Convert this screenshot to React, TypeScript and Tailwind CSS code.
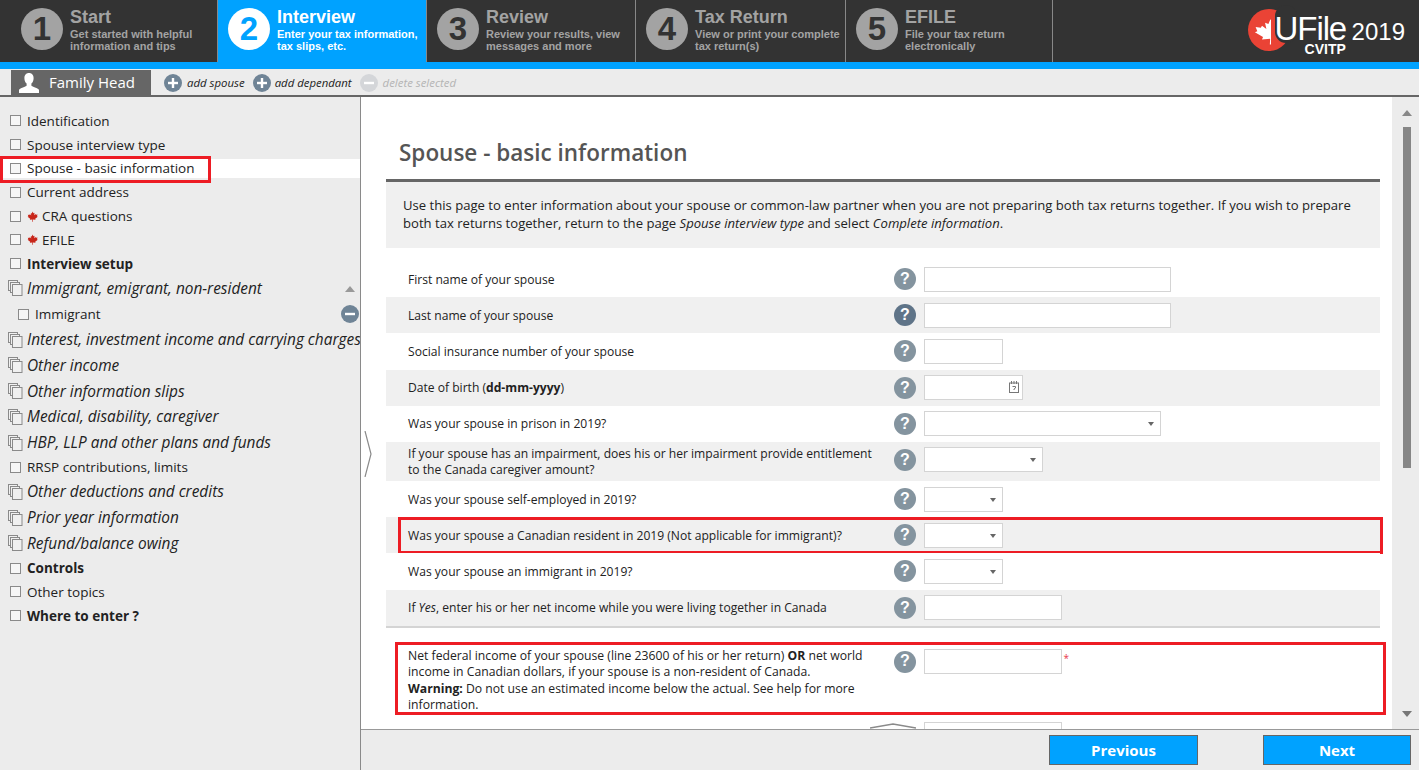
import type { ReactNode } from 'react';

const steps = [
  { n: 1, title: 'Start', sub: ['Get started with helpful', 'information and tips'], w: 'w-[218px]' },
  { n: 2, title: 'Interview', sub: ['Enter your tax information,', 'tax slips, etc.'], w: 'w-[209px]', active: true },
  { n: 3, title: 'Review', sub: ['Review your results, view', 'messages and more'], w: 'w-[209px]' },
  { n: 4, title: 'Tax Return', sub: ['View or print your complete', 'tax return(s)'], w: 'w-[210px]' },
  { n: 5, title: 'EFILE', sub: ['File your tax return', 'electronically'], w: 'w-[207px]' },
];

const LEAF =
  'M12 1l2.2 4 2.3-1.2-.9 5.6 3-3 .8 1.9 3.6-.7-1.2 3.8 1.7.9-5.6 4.6.7 2.2-5.6-.7.2 5.1h-1.6l.2-5.1-5.6.7.7-2.2L1.3 12.7 3 11.8 1.8 8l3.6.7.8-1.9 3 3-.9-5.6 2.3 1.2z';

function Leaf({ className }: { className: string }) {
  return (
    <svg viewBox="0 0 24 24" className={className} fill="currentColor">
      <path d={LEAF} />
    </svg>
  );
}

function RoundIcon({ kind, muted }: { kind: 'plus' | 'minus'; muted?: boolean }) {
  return (
    <span
      className={`flex h-[18px] w-[18px] shrink-0 items-center justify-center rounded-full ${
        muted ? 'bg-[#d4d6d9]' : 'bg-[#6f8496]'
      }`}
    >
      <svg viewBox="0 0 18 18" className="h-[18px] w-[18px]" fill="#fff">
        <rect x="4" y="7.8" width="10" height="2.4" />
        {kind === 'plus' && <rect x="7.8" y="4" width="2.4" height="10" />}
      </svg>
    </span>
  );
}

function CopyBox() {
  return (
    <svg viewBox="0 0 15 16" className="h-4 w-[15px] shrink-0" fill="#f0f0f0" stroke="#8a8a8a" strokeWidth="1">
      <rect x="0.5" y="0.5" width="9" height="10" />
      <rect x="2.5" y="2.5" width="9" height="10" />
      <rect x="4.5" y="4.5" width="9.5" height="11" />
    </svg>
  );
}

function Check() {
  return <span className="h-[11px] w-[11px] shrink-0 border border-[#8a8a8a] bg-[#f6f6f6]" />;
}

function SideRow({ children, selected }: { children: ReactNode; selected?: boolean }) {
  return (
    <div className={`relative flex h-[23.8px] items-center gap-[6px] pl-[10px] text-[13.5px] text-[#222] ${selected ? 'z-0' : ''}`}>
      {selected && <span className="absolute inset-x-0 top-[2.4px] bottom-[2.4px] -z-10 bg-white" />}
      {selected && <span className="absolute left-0 -top-[1px] h-[27px] w-[211px] border-[3px] border-[#ed1c24]" />}
      <Check />
      {children}
    </div>
  );
}

function Group({ label }: { label: string }) {
  return (
    <div className="flex h-[25.7px] items-center gap-[4px] whitespace-nowrap pl-[8px] text-[15.4px] italic text-[#222]">
      <CopyBox />
      {label}
    </div>
  );
}

function Help({ dark }: { dark?: boolean }) {
  return (
    <span
      className={`flex h-[22px] w-[22px] shrink-0 items-center justify-center rounded-full font-['Liberation_Sans',sans-serif] text-[16px] font-bold text-white ${
        dark ? 'bg-[#5f7488]' : 'bg-[#84949f]'
      }`}
    >
      ?
    </span>
  );
}

function Field({ w, kind, required }: { w: string; kind?: 'select' | 'date'; required?: boolean }) {
  return (
    <span className="relative flex items-start">
      <span className={`relative block h-[25px] border border-[#d4d4d4] bg-white ${w}`}>
        {kind === 'select' && (
          <span className="absolute right-[6px] top-[10px] h-0 w-0 border-x-[3px] border-t-[4px] border-x-transparent border-t-[#666]" />
        )}
        {kind === 'date' && (
          <svg viewBox="0 0 10 12" className="absolute right-[3px] top-[5px] h-3 w-[10px]" fill="none" stroke="#777" strokeWidth="1">
            <rect x="0.5" y="2" width="9" height="9.5" />
            <path d="M2.5 0v3M5 0v3M7.500 0v3M3.500 5.500h3v1.500l-1.500 1v1" />
          </svg>
        )}
      </span>
      {required && <span className="absolute -right-[7px] top-[1px] text-[10px] text-[#e8374a]">*</span>}
    </span>
  );
}

type Row = {
  label: ReactNode;
  w: string;
  kind?: 'select' | 'date';
  tall?: boolean;
  dark?: boolean;
  marked?: boolean;
};

const rows: Row[] = [
  { label: 'First name of your spouse', w: 'w-[247px]' },
  { label: 'Last name of your spouse', w: 'w-[247px]', dark: true },
  { label: 'Social insurance number of your spouse', w: 'w-[79px]' },
  { label: <>Date of birth (<b>dd-mm-yyyy</b>)</>, w: 'w-[99px]', kind: 'date' },
  { label: 'Was your spouse in prison in 2019?', w: 'w-[237px]', kind: 'select' },
  {
    label: (
      <>
        If your spouse has an impairment, does his or her impairment provide entitlement
        <br />
        to the Canada caregiver amount?
      </>
    ),
    w: 'w-[119px]',
    kind: 'select',
    tall: true,
  },
  { label: 'Was your spouse self-employed in 2019?', w: 'w-[79px]', kind: 'select' },
  { label: 'Was your spouse a Canadian resident in 2019 (Not applicable for immigrant)?', w: 'w-[79px]', kind: 'select', marked: true },
  { label: 'Was your spouse an immigrant in 2019?', w: 'w-[79px]', kind: 'select' },
  { label: <>If <i>Yes</i>, enter his or her net income while you were living together in Canada</>, w: 'w-[138px]' },
];

export default function App() {
  return (
    <div className="flex h-[770px] w-[1419px] flex-col overflow-hidden bg-[#ececec] font-['Open_Sans',sans-serif] text-[#222]">
      {/* Steps */}
      <header className="flex h-[62px] shrink-0 bg-[#333] font-['Liberation_Sans',sans-serif]">
        {steps.map((s) => (
          <div
            key={s.n}
            className={`flex h-full items-start border-r border-[#888] ${s.w} ${
              s.n === 1 ? 'pl-[21px]' : 'pl-[10px]'
            } ${s.active ? 'bg-[#00a2ff] text-white' : 'text-[#a3a3a3]'}`}
          >
            <span
              className={`mt-[8px] flex h-[42px] w-[42px] shrink-0 items-center justify-center rounded-full text-[33px] font-bold ${
                s.active ? 'bg-white text-[#00a2ff]' : 'bg-[#a3a3a3] text-[#333]'
              }`}
            >
              {s.n}
            </span>
            <div className="ml-[7px] pt-[7px]">
              <div className="text-[18px] font-bold leading-[20px]">{s.title}</div>
              <div className="mt-[1px] whitespace-nowrap text-[11px] font-bold leading-[12px]">
                {s.sub[0]}
                <br />
                {s.sub[1]}
              </div>
            </div>
          </div>
        ))}
        <div className="ml-auto mr-[14px] flex items-start font-['Liberation_Sans',sans-serif] text-white">
          <div className="relative h-[62px] w-[100px]">
            <span className="absolute left-[2px] top-[9px] h-[42px] w-[42px] rounded-full bg-[#ea4335]" />
            <span className="absolute left-[29px] top-[5px] h-[38px] w-[22px] rounded-[11px] bg-[#333]" />
            {/* left half of the leaf, the stem is the right edge */}
            <svg viewBox="0 0 12.4 24" preserveAspectRatio="none" className="absolute left-[7px] top-[18px] h-[27px] w-[18px]" fill="#fff">
              <path d={LEAF} />
            </svg>
            <span className="absolute left-[29px] top-[16px] text-[33px] leading-[26px] tracking-[-1.1px]">UFile</span>
            <span className="absolute left-[59px] top-[42px] text-[14px] font-bold leading-[14px]">CVITP</span>
          </div>
          <span className="ml-[6px] mt-[18px] text-[24px] leading-[28px]">2019</span>
        </div>
      </header>
      <div className="h-[7px] shrink-0 bg-[#00a2ff]" />

      {/* Family toolbar */}
      <div className="flex h-[28px] shrink-0 items-end border-b-[2px] border-[#666] pl-[11px]">
        <div className="flex h-[25px] w-[140px] items-center bg-[#666] pl-[6px] text-[15px] text-white">
          <svg viewBox="0 0 24 24" className="h-[24px] w-[24px]" fill="#fff">
            <path d="M12 2c3 0 4.600 2.200 4.600 5.200 0 2.400-1 4.400-2.200 5.400v2c0 1 5.600 2 7.600 4.200V22H2v-3.200c2-2.200 7.600-3.200 7.600-4.200v-2C8.400 11.600 7.400 9.600 7.400 7.200 7.400 4.200 9 2 12 2z" />
          </svg>
          <span className="ml-[8px]">Family Head</span>
        </div>
        <div className="flex h-[25px] items-center pl-[13px] text-[11.4px] italic">
          <RoundIcon kind="plus" />
          <span className="ml-[5px]">add spouse</span>
          <span className="w-[8px]" />
          <RoundIcon kind="plus" />
          <span className="ml-[4px]">add dependant</span>
          <span className="w-[8px]" />
          <RoundIcon kind="minus" muted />
          <span className="ml-[5px] text-[#b4b4b4]">delete selected</span>
        </div>
      </div>

      <div className="flex min-h-0 flex-1">
        {/* Sidebar */}
        <aside className="relative w-[361px] shrink-0 overflow-hidden border-r border-[#8a8a8a] pt-[12px]">
          <SideRow>Identification</SideRow>
          <SideRow>Spouse interview type</SideRow>
          <SideRow selected>Spouse - basic information</SideRow>
          <SideRow>Current address</SideRow>
          <SideRow><Leaf className="h-[11px] w-[11px] text-[#c8261a]" /><span className="-ml-[2px]">CRA questions</span></SideRow>
          <SideRow><Leaf className="h-[11px] w-[11px] text-[#c8261a]" /><span className="-ml-[2px]">EFILE</span></SideRow>
          <SideRow><b>Interview setup</b></SideRow>
          <div className="relative">
            <Group label="Immigrant, emigrant, non-resident" />
            <span className="absolute right-[5px] top-[10px] h-0 w-0 border-x-[5px] border-b-[6px] border-x-transparent border-b-[#999]" />
          </div>
          <div className="flex h-[25.7px] items-center gap-[6px] pl-[18px] text-[13.5px]">
            <Check />
            Immigrant
            <span className="ml-auto mr-[1px]"><RoundIcon kind="minus" /></span>
          </div>
          <Group label="Interest, investment income and carrying charges" />
          <Group label="Other income" />
          <Group label="Other information slips" />
          <Group label="Medical, disability, caregiver" />
          <Group label="HBP, LLP and other plans and funds" />
          <SideRow>RRSP contributions, limits</SideRow>
          <Group label="Other deductions and credits" />
          <Group label="Prior year information" />
          <Group label="Refund/balance owing" />
          <SideRow><b>Controls</b></SideRow>
          <SideRow>Other topics</SideRow>
          <SideRow><b>Where to enter ?</b></SideRow>
        </aside>

        {/* Main */}
        <div className="flex min-w-0 flex-1 flex-col">
          <div className="flex min-h-0 flex-1">
            <div className="relative flex w-[1031px] shrink-0 flex-col overflow-hidden bg-white pl-[25px] pr-[12px]">
              <svg viewBox="0 0 8 46" className="absolute left-[3px] top-[334px] h-[46px] w-2" fill="none" stroke="#8a8a8a" strokeWidth="1.2">
                <path d="M1 0l6 23-6 23" />
              </svg>
              <h1 className="flex h-[85px] shrink-0 items-end border-b-[3px] border-[#666] pb-[11px] pl-[13px] text-[22.5px] font-semibold leading-[30px] text-[#555]">
                Spouse - basic information
              </h1>
              <div className="h-[66px] shrink-0 bg-[#f0f0f0] pl-[17px] pt-[14px] text-[13.1px] leading-[18px]">
                Use this page to enter information about your spouse or common-law partner when you are not preparing both tax returns together. If you wish to prepare
                <br />
                both tax returns together, return to the page <i>Spouse interview type</i> and select <i>Complete information</i>.
              </div>
              <div className="mt-[13px] shrink-0 border-b-[2px] border-[#d4d4d4]">
                {rows.map((r, i) => (
                  <div
                    key={i}
                    className={`relative flex items-center pl-[22px] text-[12.1px] leading-[16px] ${r.tall ? 'h-[39px]' : 'h-[36.2px]'} ${
                      i % 2 ? 'bg-[#f0f0f0]' : 'bg-white'
                    }`}
                  >
                    <span className="w-[486px] shrink-0 pt-[1px]">{r.label}</span>
                    <span className={`flex items-center ${r.tall ? 'pb-[3px]' : ''}`}>
                      <Help dark={r.dark} />
                      <span className="ml-[8px]"><Field w={r.w} kind={r.kind} /></span>
                    </span>
                    {r.marked && <span className="absolute left-[12px] top-0 h-[37px] w-[985px] border-[3px] border-[#ed1c24]" />}
                  </div>
                ))}
              </div>
              <div className="relative mt-[14px] flex h-[73px] shrink-0 items-start pl-[22px] pt-[6px] text-[12.2px] leading-[16.5px]">
                <span className="w-[486px] shrink-0">
                  Net federal income of your spouse (line 23600 of his or her return) <b>OR</b> net world<br />
                  income in Canadian dollars, if your spouse is a non-resident of Canada.<br />
                  <b>Warning:</b> Do not use an estimated income below the actual. See help for more<br />
                  information.
                </span>
                <span className="mt-[3px]"><Help /></span>
                <span className="ml-[8px] mt-[1px]"><Field w="w-[138px]" required /></span>
                <span className="absolute left-[9px] top-0 h-[73px] w-[991px] border-[3px] border-[#ed1c24]" />
              </div>
              <div className="mt-[7px] flex h-[10px] shrink-0 items-start pl-[484px]">
                <svg viewBox="0 0 46 6" className="mt-[1px] h-[6px] w-[46px] shrink-0" fill="none" stroke="#8a8a8a" strokeWidth="1.4">
                  <path d="M0 5l23-4 23 4" />
                </svg>
                <span className="ml-[8px]"><Field w="w-[138px]" /></span>
              </div>
            </div>
            {/* Scrollbar */}
            <div className="flex flex-1 bg-white">
              <div className="ml-auto flex w-[27px] flex-col items-center bg-[#ececec] pl-[3px] pt-[13px]">
                <span className="h-0 w-0 border-x-[5px] border-b-[6px] border-x-transparent border-b-[#888]" />
                <span className="mt-[11px] h-[341px] w-[8px] bg-[#868686]" />
                <span className="mt-[243px] h-0 w-0 border-x-[5px] border-t-[6px] border-x-transparent border-t-[#777]" />
              </div>
            </div>
          </div>
          <footer className="flex h-[41px] shrink-0 items-start border-t border-[#999] bg-[#ececec] pl-[688px] pt-[5px]">
            <button className="h-[30px] w-[149px] border border-[#666] bg-[#00a2ff] text-[15px] font-bold text-white">Previous</button>
            <button className="ml-[65px] h-[30px] w-[148px] border border-[#666] bg-[#00a2ff] text-[15px] font-bold text-white">Next</button>
          </footer>
        </div>
      </div>
    </div>
  );
}
